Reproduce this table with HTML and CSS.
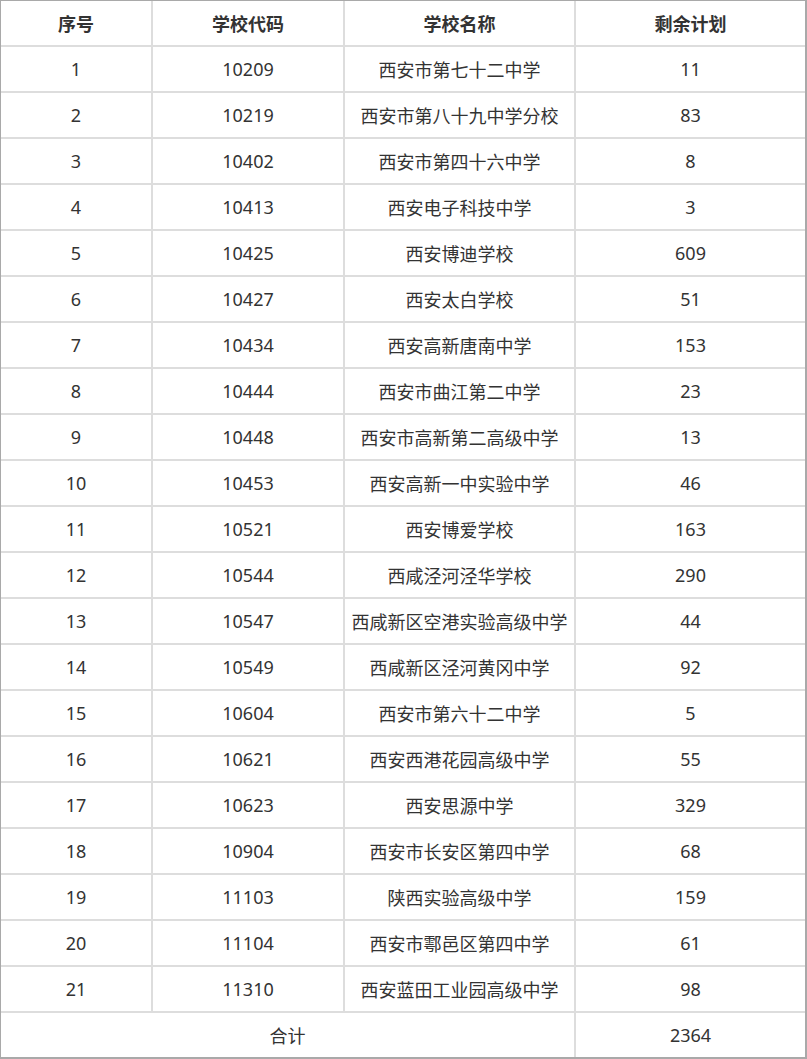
FILE: index.html
```html
<!DOCTYPE html>
<html lang="zh-CN">
<head>
<meta charset="utf-8">
<title>剩余计划</title>
<link rel="stylesheet" href="styles.css">
</head>
<body>
<div class="plan-table">
  <div class="cell head">序号</div><div class="cell head">学校代码</div><div class="cell head">学校名称</div><div class="cell head">剩余计划</div>
  <div class="cell">1</div><div class="cell">10209</div><div class="cell">西安市第七十二中学</div><div class="cell">11</div>
  <div class="cell">2</div><div class="cell">10219</div><div class="cell">西安市第八十九中学分校</div><div class="cell">83</div>
  <div class="cell">3</div><div class="cell">10402</div><div class="cell">西安市第四十六中学</div><div class="cell">8</div>
  <div class="cell">4</div><div class="cell">10413</div><div class="cell">西安电子科技中学</div><div class="cell">3</div>
  <div class="cell">5</div><div class="cell">10425</div><div class="cell">西安博迪学校</div><div class="cell">609</div>
  <div class="cell">6</div><div class="cell">10427</div><div class="cell">西安太白学校</div><div class="cell">51</div>
  <div class="cell">7</div><div class="cell">10434</div><div class="cell">西安高新唐南中学</div><div class="cell">153</div>
  <div class="cell">8</div><div class="cell">10444</div><div class="cell">西安市曲江第二中学</div><div class="cell">23</div>
  <div class="cell">9</div><div class="cell">10448</div><div class="cell">西安市高新第二高级中学</div><div class="cell">13</div>
  <div class="cell">10</div><div class="cell">10453</div><div class="cell">西安高新一中实验中学</div><div class="cell">46</div>
  <div class="cell">11</div><div class="cell">10521</div><div class="cell">西安博爱学校</div><div class="cell">163</div>
  <div class="cell">12</div><div class="cell">10544</div><div class="cell">西咸泾河泾华学校</div><div class="cell">290</div>
  <div class="cell">13</div><div class="cell">10547</div><div class="cell">西咸新区空港实验高级中学</div><div class="cell">44</div>
  <div class="cell">14</div><div class="cell">10549</div><div class="cell">西咸新区泾河黄冈中学</div><div class="cell">92</div>
  <div class="cell">15</div><div class="cell">10604</div><div class="cell">西安市第六十二中学</div><div class="cell">5</div>
  <div class="cell">16</div><div class="cell">10621</div><div class="cell">西安西港花园高级中学</div><div class="cell">55</div>
  <div class="cell">17</div><div class="cell">10623</div><div class="cell">西安思源中学</div><div class="cell">329</div>
  <div class="cell">18</div><div class="cell">10904</div><div class="cell">西安市长安区第四中学</div><div class="cell">68</div>
  <div class="cell">19</div><div class="cell">11103</div><div class="cell">陕西实验高级中学</div><div class="cell">159</div>
  <div class="cell">20</div><div class="cell">11104</div><div class="cell">西安市鄠邑区第四中学</div><div class="cell">61</div>
  <div class="cell">21</div><div class="cell">11310</div><div class="cell">西安蓝田工业园高级中学</div><div class="cell">98</div>
  <div class="cell span3">合计</div><div class="cell">2364</div>
</div>
</body>
</html>
```
FILE: styles.css
```css
html, body {
  margin: 0;
  padding: 0;
  background: #fff;
}
.plan-table {
  width: 807px;
  height: 1059px;
  box-sizing: border-box;
  border-style: solid;
  border-color: #a9a9a9;
  border-width: 1px 2px 2px 1px;
  display: grid;
  grid-template-columns: 150px 190px 229px 229px;
  grid-auto-rows: 44px;
  gap: 2px;
  background: #dddddd;
  font-family: "Noto Sans", "Noto Sans CJK SC", sans-serif;
  font-size: 18px;
  color: #333;
}
.cell {
  background: #fff;
  display: flex;
  align-items: center;
  justify-content: center;
  white-space: nowrap;
}
.head {
  font-weight: bold;
}
.span3 {
  grid-column: span 3;
}
```
